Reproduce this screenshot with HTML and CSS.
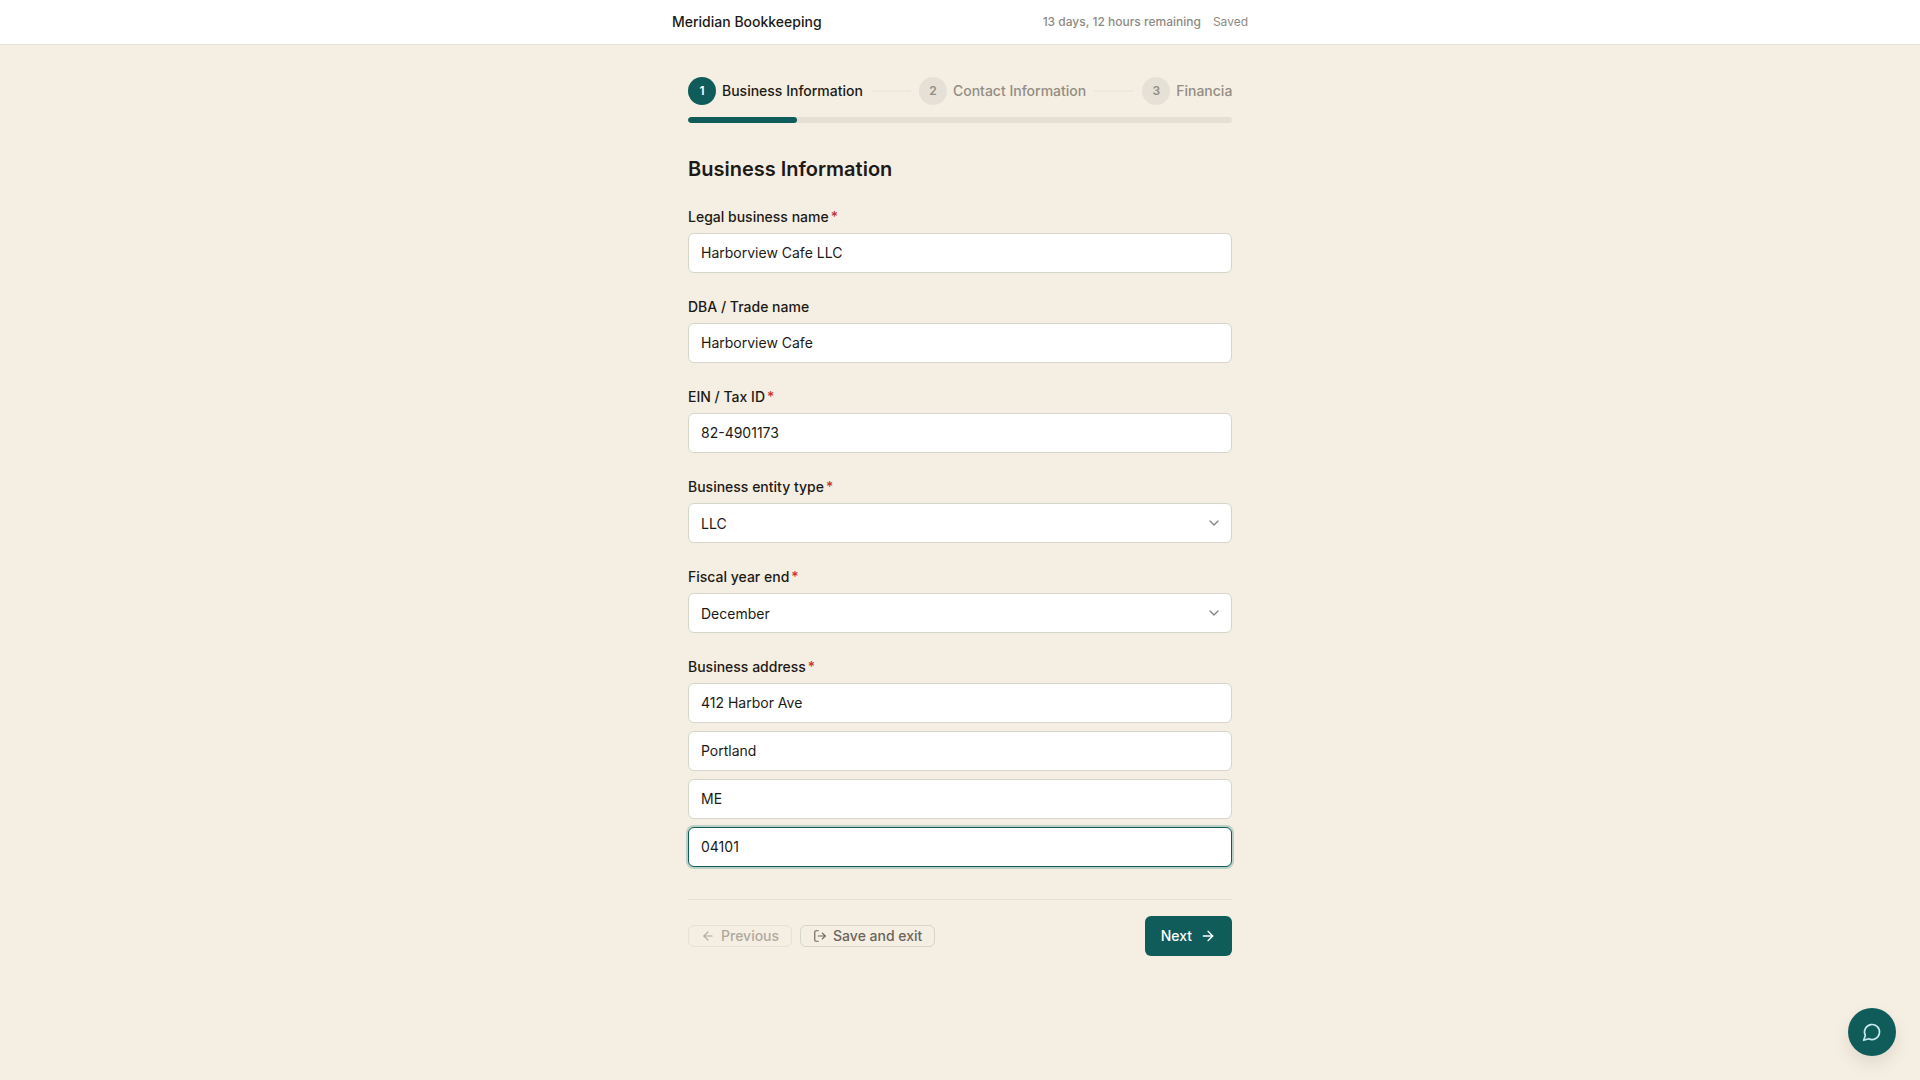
FILE: index.html
```html
<!DOCTYPE html>
<html lang="en">
<head>
<meta charset="utf-8">
<meta name="viewport" content="width=device-width, initial-scale=1">
<title>Meridian Bookkeeping</title>
<link rel="stylesheet" href="styles.css">
</head>
<body>
<header class="topbar">
  <div class="topbar-inner">
    <span class="brand">Meridian Bookkeeping</span>
    <div class="status">
      <span class="remaining">13 days, 12 hours remaining</span>
      <span class="saved">Saved</span>
    </div>
  </div>
</header>
<main class="content">
  <nav aria-label="Progress">
    <ol class="steps">
      <li class="step current" aria-current="step"><span class="step-number">1</span>Business Information</li>
      <li class="connector" aria-hidden="true"></li>
      <li class="step"><span class="step-number">2</span>Contact Information</li>
      <li class="connector" aria-hidden="true"></li>
      <li class="step"><span class="step-number">3</span>Financia</li>
    </ol>
    <div class="progress"><div class="progress-fill" style="width: 20%"></div></div>
  </nav>

  <form class="form">
    <h1 class="title">Business Information</h1>
    <div class="field">
      <label class="label" for="legal">Legal business name<span class="required">*</span></label>
      <input class="control" id="legal" type="text" value="Harborview Cafe LLC">
    </div>
    <div class="field">
      <label class="label" for="dba">DBA / Trade name</label>
      <input class="control" id="dba" type="text" value="Harborview Cafe">
    </div>
    <div class="field">
      <label class="label" for="ein">EIN / Tax ID<span class="required">*</span></label>
      <input class="control" id="ein" type="text" value="82-4901173">
    </div>
    <div class="field">
      <label class="label" for="entity">Business entity type<span class="required">*</span></label>
      <div class="select-wrap">
        <select class="control select" id="entity"><option>LLC</option></select>
        <svg class="chevron" viewBox="0 0 24 24" aria-hidden="true"><path d="m6 9 6 6 6-6"/></svg>
      </div>
    </div>
    <div class="field">
      <label class="label" for="fiscal">Fiscal year end<span class="required">*</span></label>
      <div class="select-wrap">
        <select class="control select" id="fiscal"><option>December</option></select>
        <svg class="chevron" viewBox="0 0 24 24" aria-hidden="true"><path d="m6 9 6 6 6-6"/></svg>
      </div>
    </div>
    <div class="field">
      <label class="label" for="street">Business address<span class="required">*</span></label>
      <div class="address">
        <input class="control" id="street" type="text" value="412 Harbor Ave">
        <input class="control" type="text" aria-label="City" value="Portland">
        <input class="control" type="text" aria-label="State" value="ME">
        <input class="control active" type="text" aria-label="ZIP code" value="04101">
      </div>
    </div>

    <div class="actions">
      <button class="button outline" type="button" disabled>
        <svg class="icon" viewBox="0 0 24 24" aria-hidden="true"><path d="m12 19-7-7 7-7"/><path d="M19 12H5"/></svg>
        Previous
      </button>
      <button class="button outline" type="button">
        <svg class="icon" viewBox="0 0 24 24" aria-hidden="true"><path d="M9 21H5a2 2 0 0 1-2-2V5a2 2 0 0 1 2-2h4"/><path d="m16 17 5-5-5-5"/><path d="M21 12H9"/></svg>
        Save and exit
      </button>
      <button class="button primary" type="submit">
        Next
        <svg class="icon" viewBox="0 0 24 24" aria-hidden="true"><path d="M5 12h14"/><path d="m12 5 7 7-7 7"/></svg>
      </button>
    </div>
  </form>
</main>
<button class="chat" type="button" aria-label="Open chat">
  <svg class="chat-icon" viewBox="0 0 24 24" aria-hidden="true"><path d="M7.9 20A9 9 0 1 0 4 16.1L2 22Z"/></svg>
</button>
</body>
</html>
```
FILE: styles.css
```css
*,
*::before,
*::after {
  box-sizing: border-box;
}

body {
  margin: 0;
  min-height: 100vh;
  background: #f5eee2;
  color: #1c1a16;
  font-family: Inter, "Liberation Sans", sans-serif;
  font-size: 14px;
  line-height: 20px;
}

button,
input,
select {
  font: inherit;
}

.topbar {
  background: #fff;
  border-bottom: 1px solid #e8e2d8;
}

.topbar-inner {
  display: flex;
  align-items: center;
  justify-content: space-between;
  max-width: 576px;
  margin: 0 auto;
  padding: 12px 0;
}

.brand {
  font-weight: 500;
}

.status {
  display: flex;
  gap: 12px;
  color: #8e8a83;
  font-size: 12px;
}

.remaining {
  font-weight: 500;
}

.content {
  max-width: 576px;
  margin: 0 auto;
  padding: 32px 16px;
}

.steps {
  display: flex;
  align-items: center;
  gap: 8px;
  margin: 0 0 12px;
  padding: 0;
  overflow: hidden;
  list-style: none;
}

.step {
  display: flex;
  flex-shrink: 0;
  align-items: center;
  gap: 6px;
  color: #938d82;
  font-weight: 500;
}

.step-number {
  display: flex;
  align-items: center;
  justify-content: center;
  width: 28px;
  height: 28px;
  border-radius: 50%;
  background: #e6e1d6;
  font-size: 12px;
  font-weight: 600;
}

.step.current {
  color: #1c1a16;
}

.step.current .step-number {
  background: #0f5c5a;
  color: #fff;
}

.connector {
  flex: 0 0 40px;
  height: 2px;
  background: #efe8dc;
}

.progress {
  height: 6px;
  border-radius: 3px;
  background: #e6e0d4;
  overflow: hidden;
}

.progress-fill {
  height: 100%;
  border-radius: 3px;
  background: #0f5c5a;
}

.form {
  display: flex;
  flex-direction: column;
  gap: 24px;
  margin-top: 32px;
}

.title {
  margin: 0;
  font-size: 20px;
  font-weight: 600;
  line-height: 28px;
}

.field {
  display: flex;
  flex-direction: column;
  gap: 6px;
}

.label {
  font-weight: 500;
}

.required {
  margin-left: 2px;
  color: #c8332f;
}

.control {
  width: 100%;
  height: 40px;
  padding: 0 12px 2px;
  border: 1px solid #d4d6c8;
  border-radius: 6px;
  background: #fff;
  color: #1c1a16;
  outline: none;
}

.control.active {
  border-color: #0f5c5a;
  box-shadow: 0 0 0 2px #bdd0c6;
}

.select-wrap {
  display: grid;
  align-items: center;
}

.select-wrap > * {
  grid-area: 1 / 1;
}

.select {
  padding: 2px 12px 0;
  appearance: none;
}

.chevron {
  justify-self: end;
  width: 16px;
  height: 16px;
  margin-right: 10px;
  fill: none;
  stroke: #858279;
  stroke-width: 2;
  stroke-linecap: round;
  stroke-linejoin: round;
  pointer-events: none;
}

.address {
  display: grid;
  gap: 8px;
}

.actions {
  display: flex;
  align-items: center;
  gap: 8px;
  margin-top: 8px;
  padding-top: 16px;
  border-top: 1px solid #e6e0d4;
}

.button {
  display: flex;
  align-items: center;
  gap: 6px;
  border-radius: 6px;
  font-weight: 500;
}

.icon {
  width: 14px;
  height: 14px;
  fill: none;
  stroke: currentColor;
  stroke-width: 2;
  stroke-linecap: round;
  stroke-linejoin: round;
}

.outline {
  padding: 0 12px;
  border: 1px solid #d4d6c8;
  background: transparent;
  color: #6b655b;
}

.outline:disabled {
  opacity: 0.5;
}

.primary {
  gap: 8px;
  height: 40px;
  margin-left: auto;
  padding: 0 16px;
  border: 0;
  background: #0f5c5a;
  color: #fff;
}

.primary .icon {
  width: 16px;
  height: 16px;
}

.chat {
  position: fixed;
  right: 24px;
  bottom: 24px;
  display: flex;
  align-items: center;
  justify-content: center;
  width: 48px;
  height: 48px;
  padding: 0;
  border: 0;
  border-radius: 50%;
  background: #0f5c5a;
  box-shadow: 0 8px 16px rgba(60, 50, 30, 0.1);
  color: #c5e8ee;
}

.chat-icon {
  width: 20px;
  height: 20px;
  fill: none;
  stroke: currentColor;
  stroke-width: 2;
  stroke-linecap: round;
  stroke-linejoin: round;
}
```
